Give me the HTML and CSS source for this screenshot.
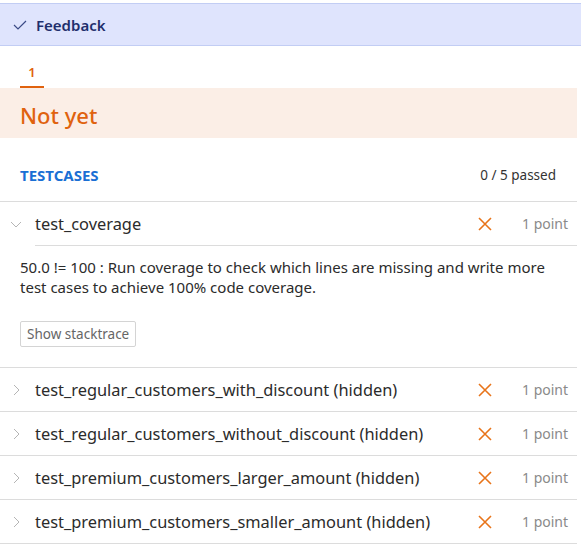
FILE: index.html
```html
<!DOCTYPE html>
<html lang="en">
<head>
    <meta charset="UTF-8">
    <meta name="viewport" content="width=device-width, initial-scale=1.0">
    <title>Feedback</title>
    <link rel="stylesheet" href="styles.css">
</head>
<body>
    <div class="feedback-header">
        <svg class="check" width="14" height="10" viewBox="0 0 14 10">
            <polyline points="1,5 5,9 13,1" fill="none" stroke="#3b4a86" stroke-width="1.2"/>
        </svg>
        <span>Feedback</span>
    </div>
    <div class="container">
        <div class="tabs">
            <div class="tab active">1</div>
        </div>
        <div class="status">Not yet</div>

        <div class="testcases-head">
            <span class="title">TESTCASES</span>
            <span class="passed">0 / 5 passed</span>
        </div>

        <div class="testcase open">
            <div class="row">
                <svg class="chevron" width="12" height="12" viewBox="0 0 12 12">
                    <polyline points="1,4 6,9 11,4" fill="none" stroke="#b5b5b5" stroke-width="1"/>
                </svg>
                <span class="name">test_coverage</span>
                <svg class="cross" width="14" height="14" viewBox="0 0 14 14">
                    <path d="M1 1 L13 13 M13 1 L1 13" stroke="#e8741a" stroke-width="1.6"/>
                </svg>
                <span class="points">1 point</span>
            </div>
            <div class="details">
                <p>50.0 != 100 : Run coverage to check which lines are missing and write more test cases to achieve 100% code coverage.</p>
                <button type="button" class="stack-btn">Show stacktrace</button>
            </div>
        </div>

        <div class="testcase">
            <div class="row">
                <svg class="chevron" width="12" height="12" viewBox="0 0 12 12">
                    <polyline points="4,1 9,6 4,11" fill="none" stroke="#b5b5b5" stroke-width="1"/>
                </svg>
                <span class="name">test_regular_customers_with_discount (hidden)</span>
                <svg class="cross" width="14" height="14" viewBox="0 0 14 14">
                    <path d="M1 1 L13 13 M13 1 L1 13" stroke="#e8741a" stroke-width="1.6"/>
                </svg>
                <span class="points">1 point</span>
            </div>
        </div>

        <div class="testcase">
            <div class="row">
                <svg class="chevron" width="12" height="12" viewBox="0 0 12 12">
                    <polyline points="4,1 9,6 4,11" fill="none" stroke="#b5b5b5" stroke-width="1"/>
                </svg>
                <span class="name">test_regular_customers_without_discount (hidden)</span>
                <svg class="cross" width="14" height="14" viewBox="0 0 14 14">
                    <path d="M1 1 L13 13 M13 1 L1 13" stroke="#e8741a" stroke-width="1.6"/>
                </svg>
                <span class="points">1 point</span>
            </div>
        </div>

        <div class="testcase">
            <div class="row">
                <svg class="chevron" width="12" height="12" viewBox="0 0 12 12">
                    <polyline points="4,1 9,6 4,11" fill="none" stroke="#b5b5b5" stroke-width="1"/>
                </svg>
                <span class="name">test_premium_customers_larger_amount (hidden)</span>
                <svg class="cross" width="14" height="14" viewBox="0 0 14 14">
                    <path d="M1 1 L13 13 M13 1 L1 13" stroke="#e8741a" stroke-width="1.6"/>
                </svg>
                <span class="points">1 point</span>
            </div>
        </div>

        <div class="testcase">
            <div class="row">
                <svg class="chevron" width="12" height="12" viewBox="0 0 12 12">
                    <polyline points="4,1 9,6 4,11" fill="none" stroke="#b5b5b5" stroke-width="1"/>
                </svg>
                <span class="name">test_premium_customers_smaller_amount (hidden)</span>
                <svg class="cross" width="14" height="14" viewBox="0 0 14 14">
                    <path d="M1 1 L13 13 M13 1 L1 13" stroke="#e8741a" stroke-width="1.6"/>
                </svg>
                <span class="points">1 point</span>
            </div>
        </div>
    </div>
</body>
</html>
```

FILE: styles.css
```css
body {
    font-family: "Noto Sans", "Open Sans", sans-serif;
    margin: 0;
    padding-top: 3px;
    background-color: white;
    color: #333;
}
.feedback-header {
    display: flex;
    align-items: center;
    height: 41px;
    background-color: #dfe4fd;
    border-top: 1px solid #c2cdf4;
    border-bottom: 1px solid #c2cdf4;
    padding-left: 13px;
    color: #1f2f6d;
    font-size: 15px;
    font-weight: 600;
}
.feedback-header .check {
    margin-right: 9px;
}
.container {
    width: 577px;
}
.tabs {
    display: flex;
    padding-left: 20px;
    height: 42px;
    align-items: flex-end;
}
.tab {
    width: 24px;
    text-align: center;
    color: #e0620e;
    font-size: 13px;
    font-weight: 600;
    padding-bottom: 5px;
    border-bottom: 2px solid #e0620e;
}
.status {
    background-color: #fbeee6;
    color: #e0620e;
    font-size: 22px;
    font-weight: 500;
    padding-left: 20px;
    height: 50px;
    line-height: 54px;
}
.testcases-head {
    display: flex;
    justify-content: space-between;
    align-items: center;
    padding: 11px 21px 0 20px;
    height: 52px;
    border-bottom: 1px solid #dcdcdc;
}
.testcases-head .title {
    color: #1a6fd4;
    font-weight: bold;
    font-size: 15px;
}
.testcases-head .passed {
    font-size: 13.5px;
    color: #333;
}
.testcase {
    border-bottom: 1px solid #dcdcdc;
}
.row {
    display: flex;
    align-items: center;
    height: 43px;
    padding-left: 10px;
}
.chevron {
    margin-right: 13px;
}
.name {
    flex-grow: 1;
    font-size: 16.4px;
    color: #2b2b2b;
}
.cross {
    margin-right: 30px;
}
.points {
    font-size: 14px;
    color: #8a8a8a;
    width: 55px;
}
.testcase.open .row {
    border-bottom: 1px solid #dcdcdc;
    margin-left: 35px;
    padding-left: 0;
    position: relative;
}
.testcase.open .row .chevron {
    position: absolute;
    left: -25px;
}
.details {
    padding: 11px 20px 20px;
}
.details p {
    margin: 0 0 24px;
    font-size: 15px;
    line-height: 20px;
    color: #2b2b2b;
}
.stack-btn {
    display: block;
    font-family: inherit;
    font-size: 13.5px;
    color: #666;
    background: white;
    border: 1px solid #d4d4d4;
    border-radius: 2px;
    padding: 3px 6px;
    height: 26px;
}
```
